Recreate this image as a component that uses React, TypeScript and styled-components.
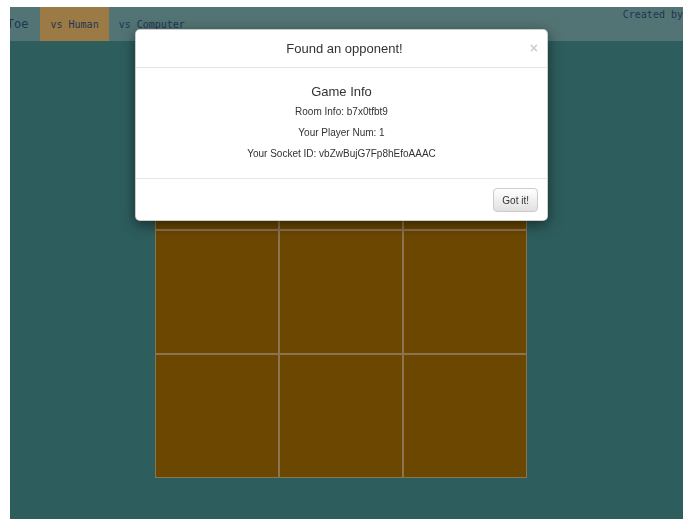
import styled, { createGlobalStyle } from "styled-components";

const GlobalStyle = createGlobalStyle`
   body {
      margin: 0;
      background: #ffffff;
   }
`;

const Page = styled.div`
   margin: 7px 6px 0 10px;
   min-height: 512px;
   background-color: #2e5d5d;
   overflow: hidden;
`;

const NavBar = styled.nav`
   display: flex;
   height: 34px;
   background-color: #537474;
   font-family: "DejaVu Sans Mono", monospace;
   color: #1f3553;
   white-space: nowrap;
`;

const Brand = styled.div`
   display: flex;
   align-items: center;
   margin-left: -61px;
   padding-right: 12px;
   font-size: 12px;
`;

interface TabProps {
   $active?: boolean;
}

const Tab = styled.div<TabProps>`
   display: flex;
   align-items: center;
   padding: 0 10px;
   font-size: 10px;
   background-color: ${(props) => (props.$active ? "#9c7a46" : "transparent")};
`;

const Credit = styled.div`
   margin-left: auto;
   padding-top: 1px;
   font-size: 10px;
   line-height: 14px;
`;

const BoardArea = styled.main`
   padding: 65px 0 0 145px;
`;

const Board = styled.div`
   display: grid;
   grid-template-columns: repeat(3, 122px);
   grid-auto-rows: 122px;
   gap: 2px;
   width: max-content;
   border: 1px solid #8b7450;
   background-color: #8b7450;
`;

const Cell = styled.div`
   background-color: #6c4701;
`;

const Modal = styled.div`
   position: fixed;
   top: 29px;
   left: 135px;
   width: 413px;
   box-sizing: border-box;
   background: #ffffff;
   border: 1px solid rgba(0, 0, 0, 0.2);
   border-radius: 5px;
   box-shadow: 0 4px 14px rgba(0, 0, 0, 0.5);
   font-family: "Liberation Sans", Helvetica, Arial, sans-serif;
   color: #333333;
`;

const ModalHeader = styled.div`
   display: grid;
   grid-template-columns: 1fr auto 1fr;
   align-items: center;
   height: 37px;
   padding: 0 9px 0 15px;
   border-bottom: 1px solid #e5e5e5;
`;

const ModalTitle = styled.h4`
   grid-column: 2;
   margin: 0;
   font-size: 13px;
   font-weight: normal;
   line-height: 16px;
`;

const CloseButton = styled.button`
   justify-self: end;
   margin-top: -2px;
   padding: 0;
   border: none;
   background: none;
   font-family: "Liberation Sans", Arial, sans-serif;
   font-size: 14px;
   font-weight: bold;
   line-height: 1;
   color: #cfcfcf;
`;

const ModalBody = styled.div`
   padding: 16px 15px 10px;
   text-align: center;
`;

const InfoTitle = styled.h4`
   margin: 0 0 5px;
   font-size: 13px;
   font-weight: normal;
   line-height: 16px;
`;

const InfoLine = styled.p`
   margin: 0 0 7px;
   font-size: 10px;
   line-height: 14px;
`;

const ModalFooter = styled.div`
   display: flex;
   justify-content: flex-end;
   padding: 9px 9px 8px;
   border-top: 1px solid #e5e5e5;
`;

const Button = styled.button`
   height: 24px;
   padding: 0 8px;
   border: 1px solid #cccccc;
   border-radius: 4px;
   background: linear-gradient(#ffffff, #e0e0e0);
   font-family: "Liberation Sans", Helvetica, Arial, sans-serif;
   font-size: 10px;
   color: #333333;
`;

export default function App() {
   return (
      <>
         <GlobalStyle />
         <Page>
            <NavBar>
               <Brand>Tic Tac Toe</Brand>
               <Tab $active>vs Human</Tab>
               <Tab>vs Computer</Tab>
               <Credit>Created by</Credit>
            </NavBar>
            <BoardArea>
               <Board>
                  {Array.from({ length: 9 }, (_, i) => (
                     <Cell key={i} />
                  ))}
               </Board>
            </BoardArea>
         </Page>
         <Modal>
            <ModalHeader>
               <ModalTitle>Found an opponent!</ModalTitle>
               <CloseButton>×</CloseButton>
            </ModalHeader>
            <ModalBody>
               <InfoTitle>Game Info</InfoTitle>
               <InfoLine>Room Info: b7x0tfbt9</InfoLine>
               <InfoLine>Your Player Num: 1</InfoLine>
               <InfoLine>Your Socket ID: vbZwBujG7Fp8hEfoAAAC</InfoLine>
            </ModalBody>
            <ModalFooter>
               <Button>Got it!</Button>
            </ModalFooter>
         </Modal>
      </>
   );
}
